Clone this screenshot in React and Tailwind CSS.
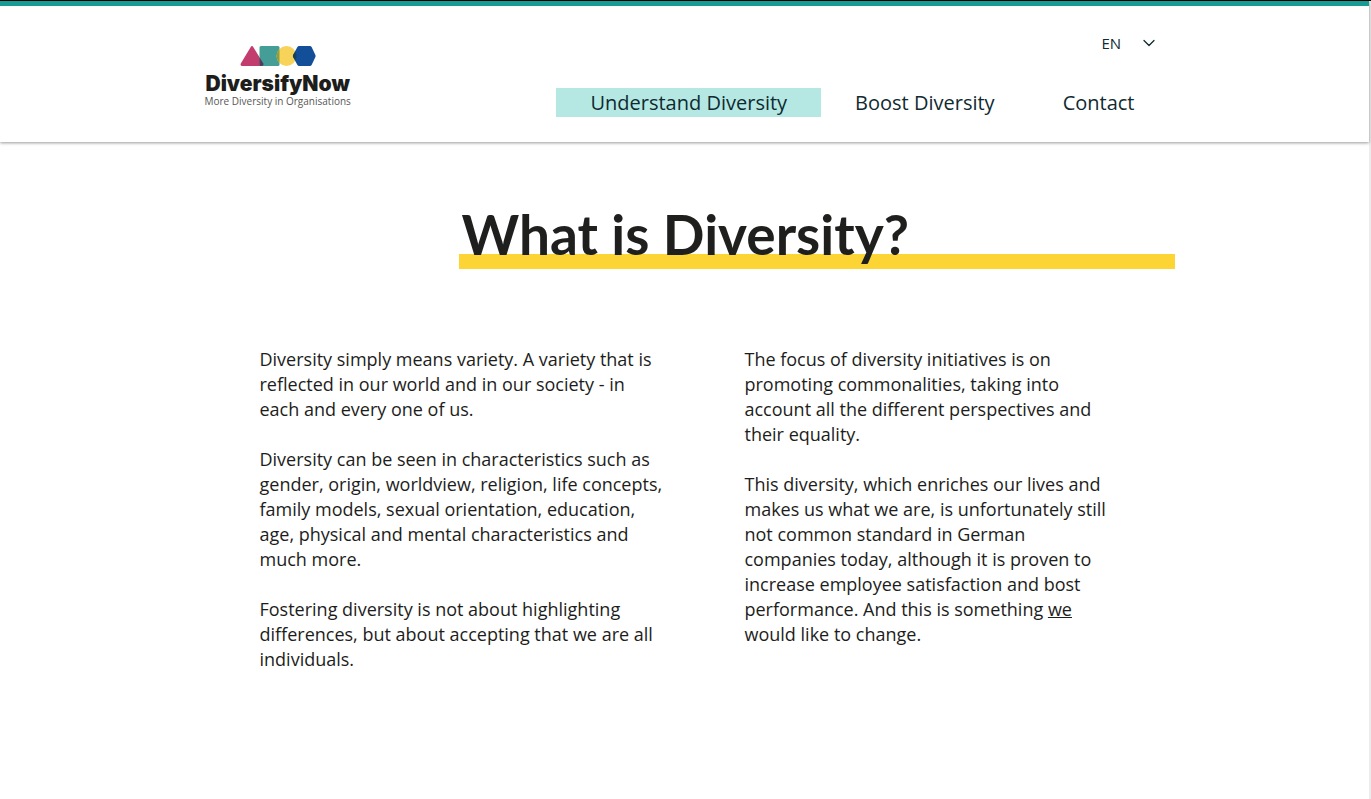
import { ChevronDown } from "lucide-react";

const navItems = [
  { label: "Understand Diversity", href: "#understand", active: true },
  { label: "Boost Diversity", href: "#boost", active: false },
  { label: "Contact", href: "#contact", active: false },
];

function Logo() {
  return (
    <a href="#home" className="flex flex-col items-center text-center">
      <svg className="h-[22px] w-[76px]" viewBox="0 0 76 22" aria-hidden="true">
        <path
          d="M10.6 2.2Q12 0 13.4 2.2L23.3 18.6Q24 21 21.8 21H2.2Q0 21 .8 18.6Z"
          fill="#c33c6e"
        />
        <rect x="19.5" y="1" width="20" height="20" rx="1.5" fill="#459d97" />
        <path d="M19.5 12.3L23.3 18.6Q24 21 21.8 21H21Q19.5 21 19.5 19.5Z" fill="#553a5c" />
        <circle cx="46.5" cy="11" r="10" fill="#f8d35a" />
        <path d="M39.5 3.9V18.1A10 10 0 0 1 39.5 3.9Z" fill="#8e9d3e" />
        <path
          d="M59 1H70Q71 1 71.6 2L75.3 9.8Q76 11 75.3 12.2L71.6 20Q71 21 70 21H59Q58 21 57.4 20L53.2 12.2Q52.6 11 53.2 9.8L57.4 2Q58 1 59 1Z"
          fill="#134f98"
        />
        <path d="M55.5 6.7Q57.6 11 55.5 15.3L53.2 12.2Q52.6 11 53.2 9.8Z" fill="#174358" />
      </svg>
      <span className="pt-1 font-['Inter',sans-serif] text-[21px] leading-[25px] font-black text-[#1d1d1b]">
        DiversifyNow
      </span>
      <span className="font-['Open_Sans',sans-serif] text-[10px] leading-[10px] text-[#575756]">
        More Diversity in Organisations
      </span>
    </a>
  );
}

function LanguageSelect() {
  return (
    <div className="relative flex items-center">
      <select
        aria-label="Language"
        defaultValue="EN"
        className="h-6 w-14 appearance-none bg-transparent pl-px text-[15px] leading-6 text-[#0f2a30]"
      >
        <option>EN</option>
        <option>DE</option>
      </select>
      <ChevronDown
        className="pointer-events-none absolute -right-[2px] size-5 text-[#0f2a30]"
        strokeWidth={1.5}
        aria-hidden="true"
      />
    </div>
  );
}

function Header() {
  return (
    <header className="border-t-[5px] border-[#169c95] bg-white pb-[25px] shadow-[0_1px_3px_rgba(0,0,0,0.4)]">
      <div className="mx-auto flex max-w-[980px] justify-between">
        <div className="pt-[39px] pl-[10px]">
          <Logo />
        </div>
        <div className="flex flex-col items-end pt-[25px] pr-[6px]">
          <div className="pr-3">
            <LanguageSelect />
          </div>
          <nav className="mt-[33px] flex text-[20px] leading-[29px] text-[#0f2a30]">
            {navItems.map((item) => (
              <a
                key={item.label}
                href={item.href}
                aria-current={item.active ? "page" : undefined}
                className={item.active ? "bg-[#b5e8e3] px-[34px]" : "px-[34px]"}
              >
                {item.label}
              </a>
            ))}
          </nav>
        </div>
      </div>
    </header>
  );
}

export default function App() {
  return (
    <div className="flex min-h-screen flex-col border-t border-black bg-white font-['Open_Sans',sans-serif]">
      <div className="flex flex-1 flex-col border-r-2 border-[#ececec]">
        <Header />
        <main className="mx-auto w-full max-w-[980px]">
          <div className="pt-[57px] pl-[264px]">
            <h1 className="bg-linear-to-t from-[#fcd535] from-[15px] to-transparent to-[15px] pl-[3px] font-['Lato',sans-serif] text-[55px] leading-[70px] font-bold text-[#1f1f1d]">
              What is Diversity?
            </h1>
          </div>
          <div className="grid grid-cols-[405px_370px] gap-x-20 pt-[78px] pl-[65px] text-[18px] leading-[25px] text-[#1d1d1b]">
            <div className="flex flex-col gap-[25px]">
              <p>
                Diversity simply means variety. A variety that is reflected in our world and in our
                society - in each and every one of us.
              </p>
              <p>
                Diversity can be seen in characteristics such as gender, origin, worldview,
                religion, life concepts, family models, sexual orientation, education, age, physical
                and mental characteristics and much more.
              </p>
              <p>
                Fostering diversity is not about highlighting differences, but about accepting that
                we are all individuals.
              </p>
            </div>
            <div className="flex flex-col gap-[25px]">
              <p>
                The focus of diversity initiatives is on promoting commonalities, taking into
                account all the different perspectives and their equality.
              </p>
              <p>
                This diversity, which enriches our lives and makes us what we are, is unfortunately
                still not common standard in German companies today, although it is proven to
                increase employee satisfaction and bost performance. And this is something{" "}
                <a href="#about" className="underline">
                  we
                </a>{" "}
                would like to change.
              </p>
            </div>
          </div>
        </main>
      </div>
    </div>
  );
}
